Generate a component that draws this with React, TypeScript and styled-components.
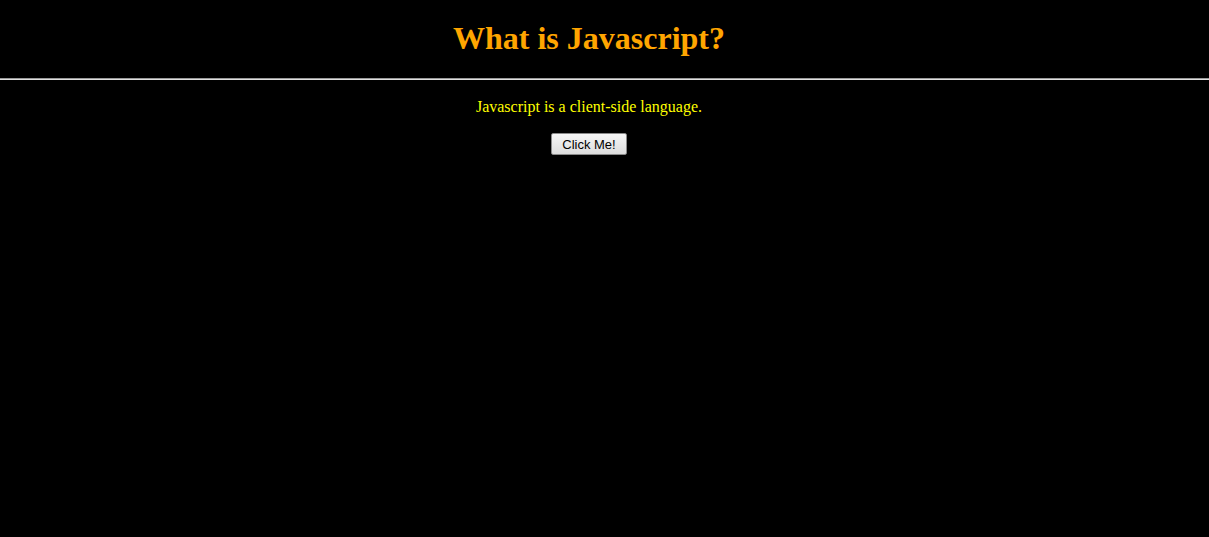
import React from "react";
import styled, { createGlobalStyle } from "styled-components";

const Global = createGlobalStyle`
  html, body { margin: 0; padding: 0; background: #000; }
  body { font-family: "Liberation Serif", "Times New Roman", serif; }
`;

const Page = styled.div`
  min-height: 537px;
  background: #000;
`;

const Header = styled.header`
  padding: 20px 31px 0 0;
  text-align: center;
`;

const Title = styled.h1`
  margin: 0 0 21px;
  font-size: 32px;
  line-height: 37px;
  font-weight: bold;
  color: #ffa500;
  font-family: "Liberation Serif", "Times New Roman", serif;
`;

const Rule = styled.hr`
  margin: 0;
  border: 0;
  height: 2px;
  background: linear-gradient(#9a9a9a 0 1px, #e0e0e0 1px 2px);
`;

const Content = styled.main`
  display: flex;
  flex-direction: column;
  align-items: center;
  padding: 18px 31px 0 0;
`;

const Text = styled.p`
  margin: 0 0 17px;
  font-size: 16px;
  line-height: 18px;
  color: #ffff00;
`;

const Button = styled.button`
  width: 76px;
  height: 22px;
  padding: 0;
  font-family: "Liberation Sans", Arial, sans-serif;
  font-size: 13px;
  color: #000;
  border: 1px solid #8a8a8a;
  border-radius: 2px;
  background: linear-gradient(#f6f6f6, #dddddd);
  cursor: pointer;
`;

export default function App() {
  return (
    <Page>
      <Global />
      <Header>
        <Title>What is Javascript?</Title>
      </Header>
      <Rule />
      <Content>
        <Text>Javascript is a client-side language.</Text>
        <Button>Click Me!</Button>
      </Content>
    </Page>
  );
}
